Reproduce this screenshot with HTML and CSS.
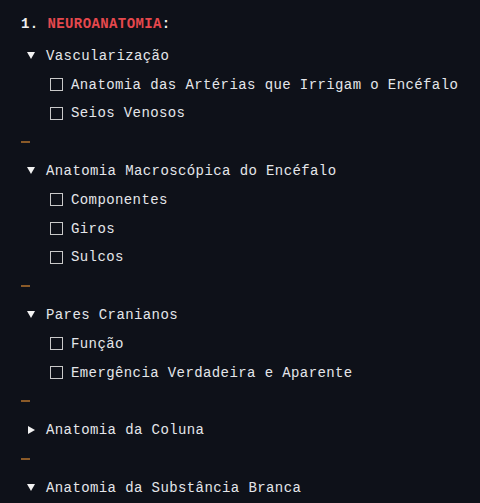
FILE: index.html
```html
<!DOCTYPE html>
<html lang="pt">
<head>
<meta charset="utf-8">
<link rel="stylesheet" href="styles.css">
</head>
<body>
<div class="doc">
  <div class="title"><span class="num">1.</span> <span class="red">NEUROANATOMIA</span>:</div>

  <div class="section">
    <div class="summary"><svg class="tri" viewBox="0 0 8 7"><path d="M0 0H8L4 7Z"/></svg><span>Vascularização</span></div>
    <div class="item"><span class="box"></span><span>Anatomia das Artérias que Irrigam o Encéfalo</span></div>
    <div class="item"><span class="box"></span><span>Seios Venosos</span></div>
  </div>
  <div class="rule"><span class="dash"></span></div>

  <div class="section">
    <div class="summary"><svg class="tri" viewBox="0 0 8 7"><path d="M0 0H8L4 7Z"/></svg><span>Anatomia Macroscópica do Encéfalo</span></div>
    <div class="item"><span class="box"></span><span>Componentes</span></div>
    <div class="item"><span class="box"></span><span>Giros</span></div>
    <div class="item"><span class="box"></span><span>Sulcos</span></div>
  </div>
  <div class="rule"><span class="dash"></span></div>

  <div class="section">
    <div class="summary"><svg class="tri" viewBox="0 0 8 7"><path d="M0 0H8L4 7Z"/></svg><span>Pares Cranianos</span></div>
    <div class="item"><span class="box"></span><span>Função</span></div>
    <div class="item"><span class="box"></span><span>Emergência Verdadeira e Aparente</span></div>
  </div>
  <div class="rule"><span class="dash"></span></div>

  <div class="section">
    <div class="summary"><svg class="tri right" viewBox="0 0 8 8"><path d="M1 0L8 4L1 8Z"/></svg><span>Anatomia da Coluna</span></div>
  </div>
  <div class="rule"><span class="dash"></span></div>

  <div class="section">
    <div class="summary"><svg class="tri" viewBox="0 0 8 7"><path d="M0 0H8L4 7Z"/></svg><span>Anatomia da Substância Branca</span></div>
  </div>
</div>
</body>
</html>
```

FILE: styles.css
```css
html, body {
  margin: 0;
  padding: 0;
  background: #0e1119;
}
body {
  font-family: "Liberation Mono", "DejaVu Sans Mono", monospace;
  font-size: 14px;
  letter-spacing: 0.4px;
  color: #e4e6ea;
}
.doc {
  padding: 10.4px 0 0 21px;
}
.title {
  height: 31px;
  line-height: 28.8px;
  font-weight: bold;
  color: #f0f0f0;
}
.title .red {
  color: #e5484d;
}
.summary, .item, .rule {
  height: 28.8px;
  display: flex;
  align-items: center;
}
.summary {
  padding-left: 6px;
}
.tri {
  width: 8px;
  height: 7px;
  margin-right: 11px;
  fill: #f2f2f2;
  flex: none;
}
.tri.right {
  height: 8px;
}
.item {
  padding-left: 29px;
}
.box {
  box-sizing: border-box;
  width: 13px;
  height: 13px;
  border: 1.5px solid #c9c9c9;
  margin-right: 8px;
  flex: none;
}
.dash {
  width: 9px;
  height: 2px;
  background: #8a5a28;
}
```
